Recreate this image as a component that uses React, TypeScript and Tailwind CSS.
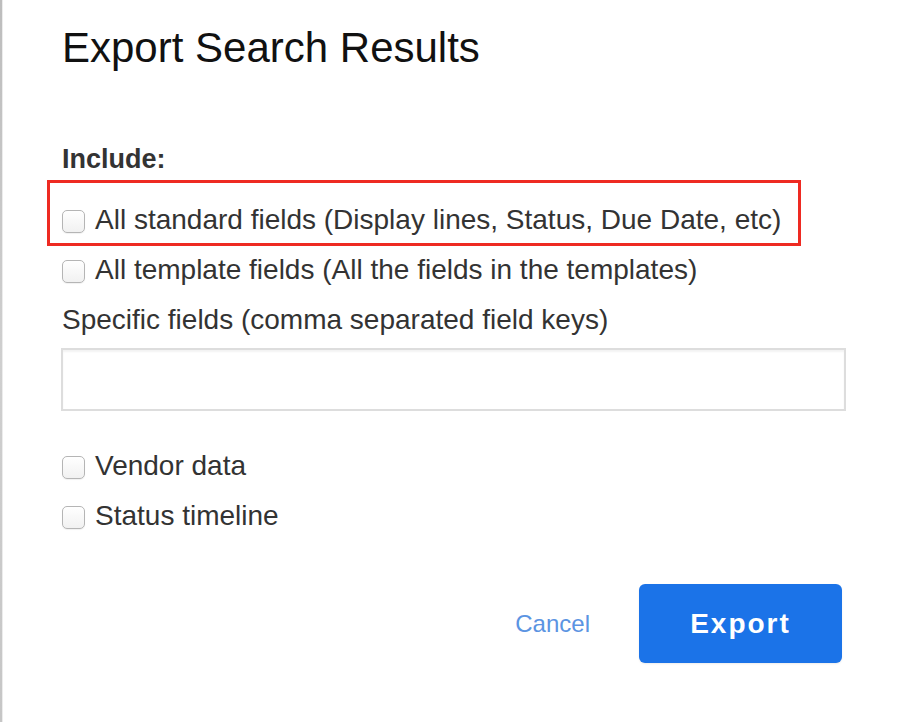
import React from "react";

function Box() {
  return (
    <span className="inline-block h-[23px] w-[23px] shrink-0 translate-y-[1px] rounded-[5px] border border-[#b5b5b5] bg-gradient-to-b from-white to-[#f1f1f1] shadow-[0_1px_1px_rgba(0,0,0,0.06)]" />
  );
}

function Row({ label }: { label: string }) {
  return (
    <div className="flex h-[50px] items-center">
      <Box />
      <span className="ml-[10px] text-[28px] leading-[50px] text-[#333333]">{label}</span>
    </div>
  );
}

export default function App() {
  return (
    <div
      className="flex h-[722px] w-[900px] bg-white"
      style={{ fontFamily: '"Liberation Sans", Arial, Helvetica, sans-serif' }}
    >
      <div className="flex w-[3px] shrink-0">
        <div className="w-[2px] bg-gradient-to-b from-[#bdbdbd] via-[#cfcfcf] to-[#c6c6c6]" />
        <div className="w-[1px] bg-[#ececec]" />
      </div>
      <div className="flex w-[843px] flex-col pl-[59px] pt-[24px]">
        <h1 className="h-[48px] text-[42px] font-normal leading-[48px] text-[#111111]">
          Export Search Results
        </h1>
        <div className="mt-[70px] h-[34px] text-[27px] font-bold leading-[34px] text-[#333333]">
          Include:
        </div>
        <div className="relative mt-[19px]">
          <Row label="All standard fields (Display lines, Status, Due Date, etc)" />
          <div className="pointer-events-none absolute left-[-15px] top-[-15px] h-[66px] w-[754px] border-[3px] border-[#ee2a22]" />
        </div>
        <Row label="All template fields (All the fields in the templates)" />
        <div className="h-[50px] text-[28px] leading-[50px] text-[#333333]">
          Specific fields (comma separated field keys)
        </div>
        <div className="ml-[-1px] mt-[3px] h-[63px] w-[785px] border-2 border-[#dddddd] bg-white shadow-[inset_0_2px_2px_rgba(0,0,0,0.05)]" />
        <div className="mt-[30px]">
          <Row label="Vendor data" />
          <Row label="Status timeline" />
        </div>
        <div className="mt-[43px] flex items-center justify-end pr-[4px]">
          <span className="mr-[49px] text-[24px] leading-[30px] text-[#5b94e2]">Cancel</span>
          <button className="flex h-[79px] w-[203px] items-center justify-center rounded-[6px] bg-[#1b73e8] text-[28px] font-bold tracking-[2px] text-white shadow-[0_1px_2px_rgba(0,0,0,0.08)]">
            Export
          </button>
        </div>
      </div>
    </div>
  );
}
